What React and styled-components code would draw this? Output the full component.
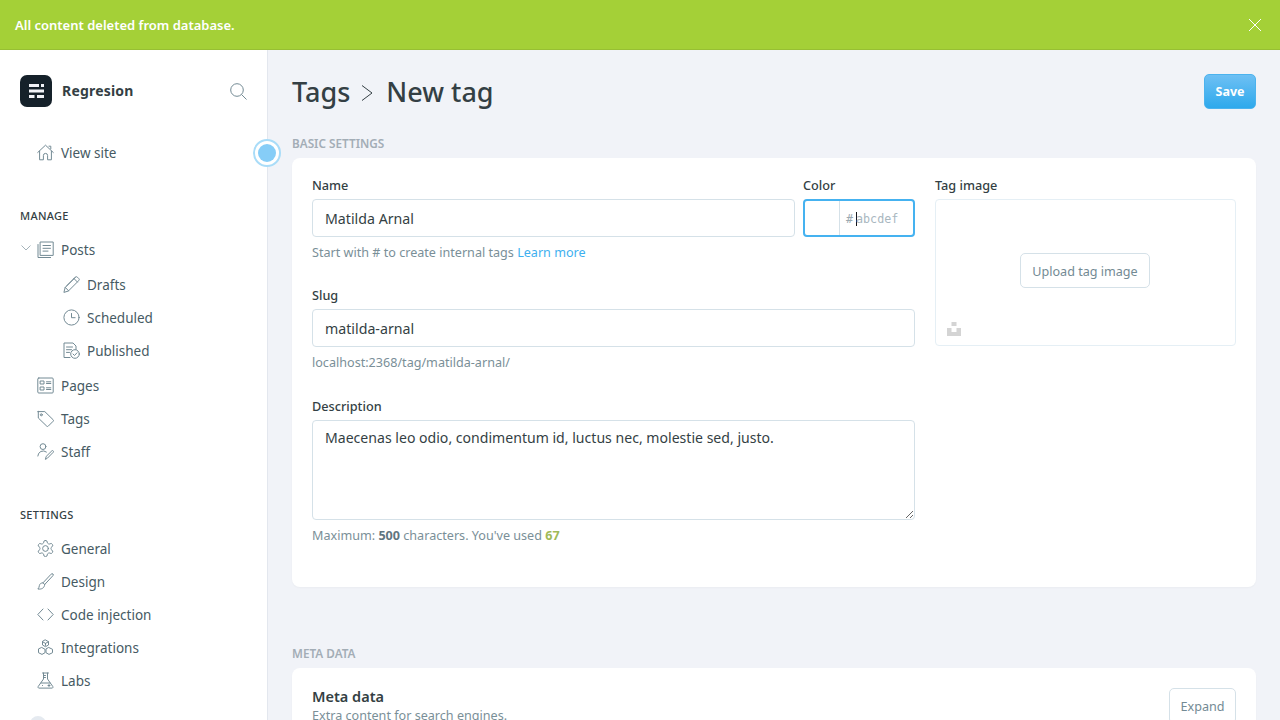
import React from "react";
import styled, { createGlobalStyle } from "styled-components";

const Global = createGlobalStyle`
  html, body { margin: 0; padding: 0; height: 720px; overflow: hidden; }
  body { font-family: "Noto Sans", "Open Sans", sans-serif; color: #15171a; background: #f1f3f8; }
  * { box-sizing: border-box; }
`;

const Page = styled.div`
  width: 1280px; height: 720px; overflow: hidden; display: flex; flex-direction: column;
`;
const Banner = styled.div`
  height: 50px; flex: none; background: #a4d037; border-bottom: 1px solid #97bf33;
  display: flex; align-items: center; justify-content: space-between; padding: 0 18px 0 15px;
  color: #fff; font-size: 13px; font-weight: 600;
`;
const Body = styled.div`
  flex: 1; display: flex; min-height: 0;
`;
const Sidebar = styled.aside`
  width: 268px; flex: none; background: #fff; border-right: 1px solid #e3e7ee; padding: 25px 20px 0 20px;
  position: relative;
`;
const Brand = styled.div`
  display: flex; align-items: center; height: 32px; margin-bottom: 29px;
`;
const Logo = styled.div`
  width: 32px; height: 32px; border-radius: 7px; background: #15212a; display: flex; align-items: center; justify-content: center;
`;
const BrandName = styled.span`
  margin: -2px 0 0 10px; font-size: 14px; font-weight: 700; letter-spacing: .2px; color: #343f44; flex: 1;
`;
const SearchBtn = styled.span`
  display: flex; margin-right: 0; color: #738a94;
`;
const NavList = styled.div`
  display: flex; flex-direction: column;
`;
const SubList = styled.div`
  display: flex; flex-direction: column; margin: 2px 0;
`;
const Row = styled.div`
  height: 33px; display: flex; align-items: center; font-size: 13.5px; color: #465a63;
  padding-left: ${p => (p.$sub ? 43 : 17)}px; position: relative;
  svg.i { width: 17px; height: 17px; margin-right: 7px; flex: none; color: #738a94; }
`;
const Caret = styled.span`
  position: absolute; left: 1px; top: 12px; display: flex; color: #a5b3ba;
`;
const Heading = styled.div`
  font-size: 11px; line-height: 16px; letter-spacing: .3px; color: #343f44; text-transform: uppercase;
  margin: 39px 0 9px 0; font-weight: 500;
`;
const Hotspot = styled.div`
  position: absolute; left: 253px; top: 89px; width: 28px; height: 28px; border-radius: 50%;
  border: 2px solid #a9dcf8; display: flex; align-items: center; justify-content: center; z-index: 2; background: #fff;
  &::after { content: ""; width: 18px; height: 18px; border-radius: 50%; background: #86cdf7; }
`;
const Avatar = styled.div`
  position: absolute; left: 30px; top: 666px; width: 16px; height: 16px; border-radius: 50%; background: #e5eaf0;
`;
const Main = styled.main`
  flex: 1; min-width: 0; padding: 24px 24px 0 24px; background: #f1f3f8;
`;
const TitleBar = styled.header`
  display: flex; justify-content: space-between; align-items: flex-start; height: 35px; margin-bottom: 26px;
`;
const Title = styled.h1`
  margin: 0; display: flex; align-items: center; height: 35px; font-size: 27px; font-weight: 500; color: #343f44; line-height: 36px;
  svg { margin: 2px 12px 0 10px; color: #343f44; }
`;
const Save = styled.button`
  width: 52px; height: 35px; border-radius: 5px; border: 1px solid #4cb3ee; background: linear-gradient(#6ec0f4, #2ea9ec);
  color: #fff; font: 700 12.5px "Noto Sans", sans-serif; padding: 0;
`;
const SectionLabel = styled.div`
  font-size: 11.75px; line-height: 16px; font-weight: 600; color: #a3adb6; text-transform: uppercase; margin: ${p => p.$top || 0}px 0 7px;
`;
const Card = styled.section`
  background: #fff; border-radius: 8px; padding: 20px;
  box-shadow: 0 1px 2px rgba(0,0,0,.03);
`;
const SettingsCard = styled(Card)`
  height: 429px; display: grid; grid-template-columns: 603px 301px; column-gap: 20px; align-items: start;
`;
const Left = styled.div`
  display: flex; flex-direction: column;
`;
const TopRow = styled.div`
  display: flex; gap: 8px;
`;
const Field = styled.div`
  display: flex; flex-direction: column; width: ${p => p.$w ? p.$w + "px" : "100%"}; margin-bottom: ${p => p.$mb || 0}px;
`;
const Label = styled.label`
  font-size: 12.7px; line-height: 14px; font-weight: 500; color: #343f44; margin-bottom: 7px;
`;
const Input = styled.input`
  width: 100%; height: 38px; border: 1px solid #d5e1e8; border-radius: 4px; padding: 0 12px; background: #fff;
  font: 14.2px "Noto Sans", sans-serif; color: #343f44; outline: none;
`;
const TextArea = styled.textarea`
  display: block; width: 100%; height: 100px; border: 1px solid #d5e1e8; border-radius: 4px; padding: 7px 12px; background: #fff;
  font: 14.08px/20px "Noto Sans", sans-serif; color: #343f44; outline: none; resize: vertical;
`;
const Hint = styled.p`
  margin: 7px 0 0; font-size: 12.6px; line-height: 17px; color: #7a8f98;
  a { color: #3eb0ef; text-decoration: none; }
  b { font-weight: 700; color: #5f7580; }
  b.ok { color: #9fbb58; }
`;
const ColorBox = styled.div`
  height: 38px; border: 2px solid #45b2f0; border-radius: 4px; display: flex; align-items: stretch; background: #fff;
`;
const Swatch = styled.div`
  width: 35px; border-right: 1px solid #d5e1e8; flex: none;
`;
const ColorText = styled.div`
  display: flex; align-items: center; padding: 1px 0 0 6px; font: 11.7px "DejaVu Sans Mono", monospace; color: #a9b7bf;
  span.pound { color: #9aa9b1; margin-right: 3px; }
`;
const TextCaret = styled.span`
  width: 1px; height: 14px; background: #15171a; margin-right: -1px; flex: none;
`;
const ImageBox = styled.div`
  height: 147px; border: 1px solid #e5eff5; border-radius: 4px; background: #fff; position: relative;
  display: flex; align-items: center; justify-content: center;
`;
const OutlineBtn = styled.button`
  height: ${p => p.$h}px; width: ${p => p.$w}px; background: #fff; border: 1px solid #d5e1e8; border-radius: 5px; padding: 1px 0 0;
  font: 12.6px "Noto Sans", sans-serif; color: #738a94; flex: none;
`;
const UploadBtn = styled(OutlineBtn)`
  margin: 0 1px 4px 0;
`;
const Unsplash = styled.svg`
  position: absolute; left: 11px; bottom: 9px; width: 14px; height: 14px;
`;
const MetaCard = styled(Card)`
  height: 100px; padding-top: 20px; display: flex; justify-content: space-between; align-items: flex-start;
`;
const MetaTitle = styled.div`
  font-size: 14.5px; line-height: 17px; font-weight: 600; color: #343f44; margin-bottom: 3px;
`;
const MetaSub = styled.div`
  font-size: 12.6px; line-height: 15px; color: #7a8f98;
`;

const Ic = ({ children }) => (
  <svg className="i" viewBox="0 0 17 17" fill="none" stroke="currentColor" strokeWidth="1" strokeLinecap="round" strokeLinejoin="round">{children}</svg>
);

const icons = {
  home: <Ic><path d="M.7 8.5 8.5 1.2l7.8 7.3M2.6 7.2v8.600h3.800v-4.300a2.100 2.100 0 0 1 4.200 0v4.300h3.800V7.200M12 2.200h1.800v2.600" /></Ic>,
  posts: <Ic><path d="M3.500 1h12.700v13.400H3.500zM1 3.500v13h12.600M6 4.500h7.500M6 7.300h7.500M6 10.100h5" /></Ic>,
  draft: <Ic><path d="m1 16 1.200-4.600L12.400 1.200a1.400 1.400 0 0 1 2 0l1.400 1.400a1.400 1.400 0 0 1 0 2L5.600 14.800zM2.200 11.400l3.400 3.400M11 2.600l3.400 3.400M3.500 10l8.800-8.700" /></Ic>,
  clock: <Ic><circle cx="8.500" cy="8.500" r="7.600" /><path d="M8.500 4.500v4.200h3.600" /></Ic>,
  published: <Ic><path d="M7 15.500H1V1h9l3 3v3.400M3.500 5h6M3.500 7.700h5M3.500 10.400h3" /><circle cx="12" cy="12" r="4.300" /><path d="m10 12 1.500 1.500L14 10.800" /></Ic>,
  pages: <Ic><rect x=".8" y="1" width="15.400" height="15" rx="1" /><path d="M3.500 4h3.500v3H3.500zM3.500 10h3.500v3H3.500zM9.500 4.800h4.300M9.500 6.500h4.300M9.500 10.800h4.300M9.500 12.500h4.300" /></Ic>,
  tag: <Ic><path d="M1 1.600h6.800l8.400 8.200a1 1 0 0 1 0 1.400l-5 5a1 1 0 0 1-1.400 0L1.300 8V1.600z" /><circle cx="4.300" cy="4.800" r="1" /></Ic>,
  staff: <Ic><circle cx="6" cy="3.600" r="2.900" /><path d="M.8 13a5.400 5.400 0 0 1 8.600-4M8.500 16l.7-2.600 5.700-5.600a1 1 0 0 1 1.400 1.400l-5.600 5.700z" /></Ic>,
  gear: <Ic><g transform="translate(-1.100 -1.100) scale(.8)" strokeWidth="1.250"><path d="M12.220 2h-.44a2 2 0 0 0-2 2v.18a2 2 0 0 1-1 1.730l-.43.25a2 2 0 0 1-2 0l-.15-.08a2 2 0 0 0-2.730.73l-.22.38a2 2 0 0 0 .73 2.730l.15.1a2 2 0 0 1 1 1.720v.51a2 2 0 0 1-1 1.740l-.15.09a2 2 0 0 0-.73 2.730l.22.38a2 2 0 0 0 2.730.73l.15-.08a2 2 0 0 1 2 0l.43.25a2 2 0 0 1 1 1.730V20a2 2 0 0 0 2 2h.44a2 2 0 0 0 2-2v-.18a2 2 0 0 1 1-1.730l.43-.25a2 2 0 0 1 2 0l.15.08a2 2 0 0 0 2.730-.73l.22-.39a2 2 0 0 0-.73-2.730l-.15-.08a2 2 0 0 1-1-1.740v-.5a2 2 0 0 1 1-1.740l.15-.09a2 2 0 0 0 .73-2.730l-.22-.38a2 2 0 0 0-2.730-.73l-.15.08a2 2 0 0 1-2 0l-.43-.25a2 2 0 0 1-1-1.730V4a2 2 0 0 0-2-2z" /><circle cx="12" cy="12" r="3.600" /></g></Ic>,
  brush: <Ic><path d="M15.900 1.100c-.5-.6-1.200-.4-1.800.1L6 9.800l1.700 1.700 8.100-8.700c.5-.6.600-1.200.100-1.700zM6 9.800c-2.300.1-3.300 1.200-3.600 2.700-.2 1.400-.6 2.600-1.500 3.500 3.400.5 6.600-.7 6.800-4.500" /></Ic>,
  code: <Ic><path d="M6 3 .8 8.500 6 14M11 3l5.200 5.500L11 14" /></Ic>,
  integ: <Ic><path d="m8.500 1 3 1.700v3.300l-3 1.700-3-1.700V2.700zM5 8.600l3 1.700v3.400l-3 1.700-3.500-1.700v-3.400zM12 8.600l3.500 1.700v3.400L12 15.400l-3-1.700v-3.400zM5.500 2.700l3 1.700 3-1.700M8.500 4.400v2" /></Ic>,
  labs: <Ic><path d="M5.500 1h6M6.500 1v6L1.200 14.500a1 1 0 0 0 .8 1.600h13a1 1 0 0 0 .8-1.600L10.500 7V1M6.500 3.500h2M6.500 5.500h2M4 11h9M5.500 13.500h.1M11 13.500h2M12 12.500v2" /></Ic>,
};

const Item = ({ icon, sub, children }) => <Row $sub={sub}>{icons[icon]}{children}</Row>;

export default function App() {
  return (
    <Page>
      <Global />
      <Banner>
        <span>All content deleted from database.</span>
        <svg width="14" height="14" viewBox="0 0 14 14" stroke="#fff" strokeWidth="1" fill="none"><path d="M1 1l12 12M13 1 1 13" /></svg>
      </Banner>
      <Body>
        <Sidebar>
          <Brand>
            <Logo>
              <svg width="15" height="14" viewBox="0 0 15 14" fill="#f1f3f8">
                <rect x="0" y="0" width="10" height="3" /><rect x="12" y="0" width="3" height="3" />
                <rect x="0" y="5.500" width="15" height="3" />
                <rect x="0" y="11" width="5.500" height="3" /><rect x="8" y="11" width="7" height="3" />
              </svg>
            </Logo>
            <BrandName>Regresion</BrandName>
            <SearchBtn>
              <svg width="17" height="17" viewBox="0 0 17 17" fill="none" stroke="currentColor"><circle cx="7" cy="7" r="6.300" /><path d="m11.500 11.500 5 5" /></svg>
            </SearchBtn>
          </Brand>
          <NavList><Item icon="home">View site</Item></NavList>
          <Heading>Manage</Heading>
          <NavList>
            <Row>
              <Caret><svg width="10" height="6" viewBox="0 0 10 6" fill="none" stroke="currentColor"><path d="m.5.500 4.500 4.500L9.500.500" /></svg></Caret>
              {icons.posts}Posts
            </Row>
            <SubList>
              <Item sub icon="draft">Drafts</Item>
              <Item sub icon="clock">Scheduled</Item>
              <Item sub icon="published">Published</Item>
            </SubList>
            <Item icon="pages">Pages</Item>
            <Item icon="tag">Tags</Item>
            <Item icon="staff">Staff</Item>
          </NavList>
          <Heading>Settings</Heading>
          <NavList>
            <Item icon="gear">General</Item>
            <Item icon="brush">Design</Item>
            <Item icon="code">Code injection</Item>
            <Item icon="integ">Integrations</Item>
            <Item icon="labs">Labs</Item>
          </NavList>
          <Avatar />
          <Hotspot />
        </Sidebar>
        <Main>
          <TitleBar>
            <Title>
              Tags
              <svg width="14" height="18" viewBox="0 0 14 18" fill="none" stroke="currentColor" strokeWidth="1"><path d="m2 1.500 10 7.500-10 7.500" /></svg>
              New tag
            </Title>
            <Save>Save</Save>
          </TitleBar>
          <SectionLabel>Basic settings</SectionLabel>
          <SettingsCard>
            <Left>
              <Field $mb={27}>
                <TopRow>
                  <Field $w={483}>
                    <Label>Name</Label>
                    <Input readOnly value="Matilda Arnal" />
                  </Field>
                  <Field $w={112}>
                    <Label>Color</Label>
                    <ColorBox>
                      <Swatch />
                      <ColorText><span className="pound">#</span><TextCaret /><span>abcdef</span></ColorText>
                    </ColorBox>
                  </Field>
                </TopRow>
                <Hint>Start with # to create internal tags <a>Learn more</a></Hint>
              </Field>
              <Field $mb={28}>
                <Label>Slug</Label>
                <Input readOnly value="matilda-arnal" />
                <Hint>localhost:2368/tag/matilda-arnal/</Hint>
              </Field>
              <Field>
                <Label>Description</Label>
                <TextArea readOnly value="Maecenas leo odio, condimentum id, luctus nec, molestie sed, justo." />
                <Hint>Maximum: <b>500</b> characters. You've used <b className="ok">67</b></Hint>
              </Field>
            </Left>
            <Field>
              <Label>Tag image</Label>
              <ImageBox>
                <UploadBtn $w={130} $h={35}>Upload tag image</UploadBtn>
                <Unsplash viewBox="0 0 14 14" fill="#d4d4d4"><path d="M4.500 0h5v4h-5zM0 6h4.500v4h5V6H14v8H0z" /></Unsplash>
              </ImageBox>
            </Field>
          </SettingsCard>
          <SectionLabel $top={58}>Meta data</SectionLabel>
          <MetaCard>
            <div>
              <MetaTitle>Meta data</MetaTitle>
              <MetaSub>Extra content for search engines.</MetaSub>
            </div>
            <OutlineBtn $w={67} $h={36}>Expand</OutlineBtn>
          </MetaCard>
        </Main>
      </Body>
    </Page>
  );
}
